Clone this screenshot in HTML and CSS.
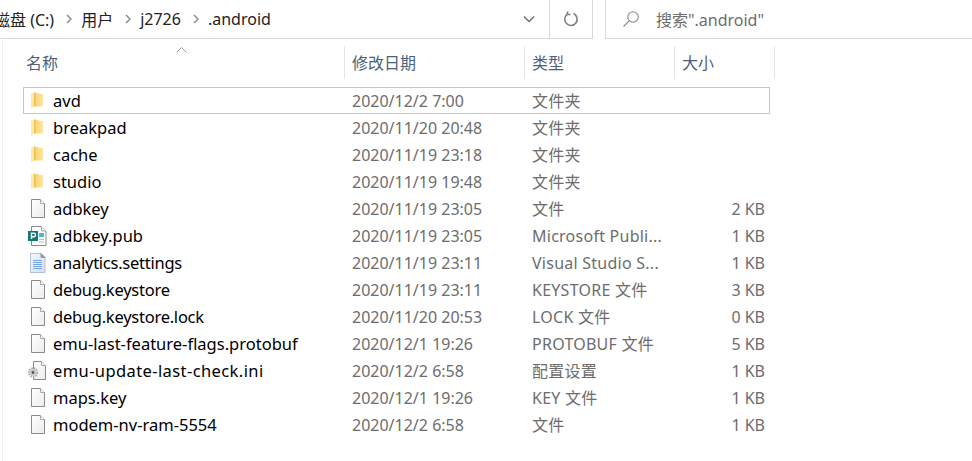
FILE: index.html
```html
<html>
<head>
    <title>.android</title>
    <link rel="stylesheet" href="styles.css">
</head>
<body>
    <svg class="icon-defs" width="0" height="0">
        <defs>
            <linearGradient id="folder-front" x1="0" y1="0" x2="1" y2="0">
                <stop offset="0" stop-color="#f7d474"/>
                <stop offset="1" stop-color="#fce6a4"/>
            </linearGradient>
            <linearGradient id="page-fill" x1="0" y1="0" x2="1" y2="1">
                <stop offset="0" stop-color="#ffffff"/>
                <stop offset="1" stop-color="#ececec"/>
            </linearGradient>
            <linearGradient id="settings-fill" x1="0" y1="0" x2="1" y2="1">
                <stop offset="0" stop-color="#f6f8fc"/>
                <stop offset="1" stop-color="#d3ddf0"/>
            </linearGradient>
            <symbol id="icon-folder" viewBox="0 0 20 20">
                <path d="M7 2h3.500l1 1H15v12.500H7z" fill="url(#folder-front)"/>
                <path d="M3 2.500L6.500 1.500V15.500L3 17.500z" fill="#ffe9a8"/>
                <path d="M6 1.500h1.500v14H6z" fill="#efc052"/>
            </symbol>
            <symbol id="icon-file" viewBox="0 0 20 20">
                <path d="M3.500 0.500h9l4 4v14h-13z" fill="url(#page-fill)" stroke="#8a8a8a"/>
                <path d="M12.500 0.500v4h4" fill="#fff" stroke="#a8a8a8"/>
            </symbol>
            <symbol id="icon-publisher" viewBox="0 0 20 20">
                <path d="M3.500 0.500h10l4.500 4.500v14.500h-14.500z" fill="#fff" stroke="#8a8a8a"/>
                <path d="M13.500 0.500v4.500h4.500" fill="#fff" stroke="#a8a8a8"/>
                <rect x="0" y="5" width="10" height="10" fill="#0f7a74"/>
                <path d="M3.500 13V7.200h2.300a1.700 1.700 0 0 1 0 3.500H3.500" fill="none" stroke="#fff" stroke-width="1.400"/>
                <path d="M11 7h5v4h-5z" fill="#35c2d0"/>
                <path d="M11 13h5v1h-5zM11 15.500h5v1h-5z" fill="#b5bcbc"/>
            </symbol>
            <symbol id="icon-settings" viewBox="0 0 20 20">
                <path d="M2.500 0.500h10.500l4 4v15h-14.500z" fill="url(#settings-fill)" stroke="#b4bfd3"/>
                <path d="M13 0.500v4h4z" fill="#8d9bb5" stroke="#8d9bb5"/>
                <path d="M5 7.500h9M5 9.500h9M5 11.500h9M5 13.500h9M5 15.500h9" stroke="#74a5e6" stroke-width="1"/>
            </symbol>
            <symbol id="icon-config" viewBox="0 0 20 20">
                <path d="M5.500 0.500h8l4 4v14h-12z" fill="url(#page-fill)" stroke="#8a8a8a"/>
                <path d="M13.500 0.500v4h4" fill="#fff" stroke="#a8a8a8"/>
                <circle cx="5" cy="11.500" r="4.200" fill="none" stroke="#a9adb0" stroke-width="2" stroke-dasharray="1.600 0.900"/>
                <circle cx="5" cy="11.500" r="3.400" fill="#c9cccf"/>
                <circle cx="5" cy="11.500" r="1.400" fill="#55595c"/>
            </symbol>
        </defs>
    </svg>

    <!-- Address bar and search -->
    <div class="toolbar">
        <div class="address">
            <div class="crumbs">
                <span class="crumb first">磁盘 (C:)</span>
                <svg class="crumb-arrow" viewBox="0 0 6 10"><path d="M1 1l4 4-4 4" /></svg>
                <span class="crumb">用户</span>
                <svg class="crumb-arrow" viewBox="0 0 6 10"><path d="M1 1l4 4-4 4" /></svg>
                <span class="crumb">j2726</span>
                <svg class="crumb-arrow" viewBox="0 0 6 10"><path d="M1 1l4 4-4 4" /></svg>
                <span class="crumb">.android</span>
            </div>
            <div class="drop-button">
                <svg class="drop-icon" viewBox="0 0 12 8"><path d="M1 1.500l5 5 5-5" /></svg>
            </div>
            <div class="refresh-button">
                <svg class="refresh-icon" viewBox="0 0 16 16"><path d="M5 2.800a6.200 6.200 0 1 0 5.500-.200" /><path d="M4.500 0.500v3h3" /></svg>
            </div>
        </div>
        <div class="search">
            <svg class="search-icon" viewBox="0 0 18 18"><circle cx="11" cy="7" r="5.200" /><path d="M7.200 10.800L1.500 16.500" /></svg>
            <span>搜索".android"</span>
        </div>
    </div>

    <!-- File list -->
    <div class="list">
        <div class="list-header">
            <div class="col-title col-name">名称</div>
            <div class="col-title">修改日期</div>
            <div class="col-title">类型</div>
            <div class="col-title">大小</div>
            <svg class="sort-arrow" viewBox="0 0 11 6"><path d="M0.500 5.500l5-5 5 5" /></svg>
        </div>

        <div class="row selected">
            <div class="name"><svg class="file-icon"><use href="#icon-folder"/></svg>avd</div>
            <div class="cell">2020/12/2 7:00</div>
            <div class="cell type">文件夹</div>
            <div class="cell size"></div>
        </div>
        <div class="row">
            <div class="name"><svg class="file-icon"><use href="#icon-folder"/></svg>breakpad</div>
            <div class="cell">2020/11/20 20:48</div>
            <div class="cell type">文件夹</div>
            <div class="cell size"></div>
        </div>
        <div class="row">
            <div class="name"><svg class="file-icon"><use href="#icon-folder"/></svg>cache</div>
            <div class="cell">2020/11/19 23:18</div>
            <div class="cell type">文件夹</div>
            <div class="cell size"></div>
        </div>
        <div class="row">
            <div class="name"><svg class="file-icon"><use href="#icon-folder"/></svg>studio</div>
            <div class="cell">2020/11/19 19:48</div>
            <div class="cell type">文件夹</div>
            <div class="cell size"></div>
        </div>
        <div class="row">
            <div class="name"><svg class="file-icon"><use href="#icon-file"/></svg>adbkey</div>
            <div class="cell">2020/11/19 23:05</div>
            <div class="cell type">文件</div>
            <div class="cell size">2 KB</div>
        </div>
        <div class="row">
            <div class="name"><svg class="file-icon"><use href="#icon-publisher"/></svg>adbkey.pub</div>
            <div class="cell">2020/11/19 23:05</div>
            <div class="cell type">Microsoft Publi...</div>
            <div class="cell size">1 KB</div>
        </div>
        <div class="row">
            <div class="name tight"><svg class="file-icon"><use href="#icon-settings"/></svg>analytics.settings</div>
            <div class="cell">2020/11/19 23:11</div>
            <div class="cell type">Visual Studio S...</div>
            <div class="cell size">1 KB</div>
        </div>
        <div class="row">
            <div class="name tight"><svg class="file-icon"><use href="#icon-file"/></svg>debug.keystore</div>
            <div class="cell">2020/11/19 23:11</div>
            <div class="cell type">KEYSTORE 文件</div>
            <div class="cell size">3 KB</div>
        </div>
        <div class="row">
            <div class="name tight"><svg class="file-icon"><use href="#icon-file"/></svg>debug.keystore.lock</div>
            <div class="cell">2020/11/20 20:53</div>
            <div class="cell type">LOCK 文件</div>
            <div class="cell size">0 KB</div>
        </div>
        <div class="row">
            <div class="name"><svg class="file-icon"><use href="#icon-file"/></svg>emu-last-feature-flags.protobuf</div>
            <div class="cell">2020/12/1 19:26</div>
            <div class="cell type">PROTOBUF 文件</div>
            <div class="cell size">5 KB</div>
        </div>
        <div class="row">
            <div class="name loose"><svg class="file-icon"><use href="#icon-config"/></svg>emu-update-last-check.ini</div>
            <div class="cell">2020/12/2 6:58</div>
            <div class="cell type">配置设置</div>
            <div class="cell size">1 KB</div>
        </div>
        <div class="row">
            <div class="name"><svg class="file-icon"><use href="#icon-file"/></svg>maps.key</div>
            <div class="cell">2020/12/1 19:26</div>
            <div class="cell type">KEY 文件</div>
            <div class="cell size">1 KB</div>
        </div>
        <div class="row">
            <div class="name"><svg class="file-icon"><use href="#icon-file"/></svg>modem-nv-ram-5554</div>
            <div class="cell">2020/12/2 6:58</div>
            <div class="cell type">文件</div>
            <div class="cell size">1 KB</div>
        </div>
    </div>
</body>
</html>
```

FILE: styles.css
```css
html, body {
    margin: 0;
    padding: 0;
    height: 100%;
    overflow: hidden;
}

body {
    font-family: 'Noto Sans', 'Noto Sans CJK SC', sans-serif;
    font-size: 16px;
    color: #111;
    background-color: #fff;
    display: flex;
    flex-direction: column;
}

.icon-defs {
    position: absolute;
}

/* Toolbar */
.toolbar {
    display: flex;
    height: 39px;
    flex-shrink: 0;
}

.address {
    display: flex;
    width: 593px;
    margin-right: 12px;
    box-sizing: border-box;
    border-right: 1px solid #d9d9d9;
    border-bottom: 1px solid #d9d9d9;
}

.crumbs {
    flex: 1;
    display: flex;
    align-items: center;
    overflow: hidden;
    color: #222;
}

.crumb {
    white-space: nowrap;
}

.crumb.first {
    margin-left: -6px;
}

.crumb-arrow {
    width: 6px;
    height: 10px;
    margin: 0 9px 0 12px;
    flex-shrink: 0;
    fill: none;
    stroke: #8c8c8c;
    stroke-width: 1.500;
}

.drop-button {
    width: 41px;
    display: flex;
    align-items: center;
    justify-content: center;
    border-right: 1px solid #d9d9d9;
}

.drop-icon {
    width: 12px;
    height: 8px;
    fill: none;
    stroke: #707070;
    stroke-width: 1.500;
}

.refresh-button {
    width: 42px;
    display: flex;
    align-items: center;
    justify-content: center;
}

.refresh-icon {
    width: 16px;
    height: 16px;
    fill: none;
    stroke: #808080;
    stroke-width: 1.600;
}

.search {
    flex: 1;
    display: flex;
    align-items: center;
    box-sizing: border-box;
    padding-left: 16px;
    border-left: 1px solid #d9d9d9;
    border-bottom: 1px solid #d9d9d9;
    color: #6d6d6d;
}

.search-icon {
    width: 18px;
    height: 18px;
    margin-right: 16px;
    fill: none;
    stroke: #8a8a8a;
    stroke-width: 1.100;
}

/* File list */
.list {
    flex: 1;
    margin-left: 2px;
    padding-left: 20px;
    padding-top: 7px;
    border-left: 1px solid #f0f0f0;
}

.list-header {
    position: relative;
    display: grid;
    grid-template-columns: 322px 180px 150px 100px;
    width: 752px;
    height: 33px;
    margin-bottom: 8px;
}

.col-title {
    display: flex;
    align-items: center;
    padding-left: 7px;
    padding-bottom: 2px;
    border-right: 1px solid #e5e5e5;
    color: #4c607a;
}

.col-name {
    padding-left: 3px;
}

.sort-arrow {
    position: absolute;
    left: 153px;
    top: 1px;
    width: 11px;
    height: 6px;
    fill: none;
    stroke: #a0a0a0;
}

.row {
    display: grid;
    grid-template-columns: 328px 180px 150px 87px;
    width: 747px;
    height: 27px;
    box-sizing: border-box;
    border: 1px solid transparent;
    align-items: center;
}

.row.selected {
    border: 1px solid #99d1ff;
}

.name {
    display: flex;
    align-items: center;
    padding-left: 4px;
    white-space: nowrap;
    color: #000;
    font-size: 16.500px;
    line-height: 23px;
}

.name.tight {
    letter-spacing: -0.250px;
}

.name.loose {
    letter-spacing: 0.400px;
}

.file-icon {
    width: 20px;
    height: 20px;
    margin-right: 5px;
    flex-shrink: 0;
}

.cell {
    color: #6d6d6d;
    white-space: nowrap;
    line-height: 23px;
    padding-top: 2px;
}

.type {
    letter-spacing: 0.250px;
}

.size {
    text-align: right;
    padding-right: 4px;
}
```
